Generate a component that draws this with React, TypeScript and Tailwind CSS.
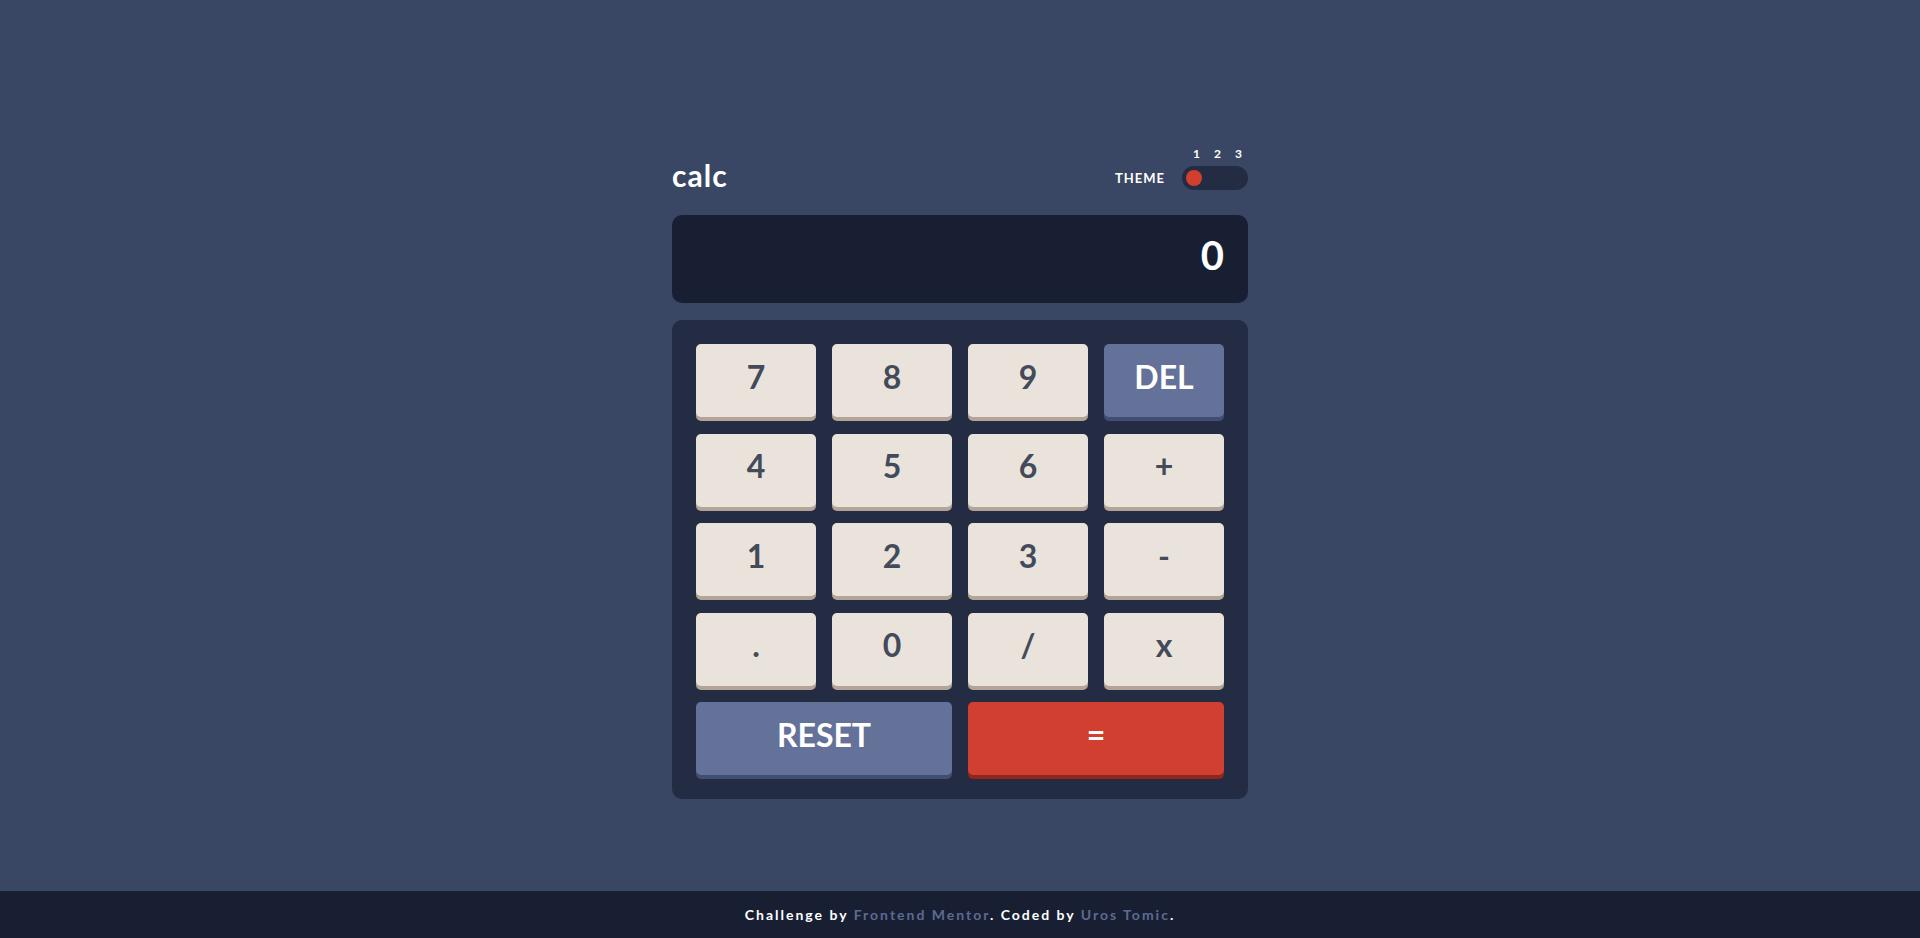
import { useState } from 'react';

type Key = { label: string; kind: 'num' | 'del' | 'eq'; wide?: boolean };

const keys: Key[] = [
  { label: '7', kind: 'num' },
  { label: '8', kind: 'num' },
  { label: '9', kind: 'num' },
  { label: 'DEL', kind: 'del' },
  { label: '4', kind: 'num' },
  { label: '5', kind: 'num' },
  { label: '6', kind: 'num' },
  { label: '+', kind: 'num' },
  { label: '1', kind: 'num' },
  { label: '2', kind: 'num' },
  { label: '3', kind: 'num' },
  { label: '-', kind: 'num' },
  { label: '.', kind: 'num' },
  { label: '0', kind: 'num' },
  { label: '/', kind: 'num' },
  { label: 'x', kind: 'num' },
  { label: 'RESET', kind: 'del', wide: true },
  { label: '=', kind: 'eq', wide: true },
];

const keyStyles = {
  num: 'bg-[#eae3dc] text-[#434a59] shadow-[0_4px_0_#b3a497] hover:bg-white',
  del: 'bg-[#647198] text-white shadow-[0_4px_0_#414e73] hover:bg-[#a2b2e1]',
  eq: 'bg-[#d03f2f] text-white shadow-[0_4px_0_#93261a] hover:bg-[#f96b5b]',
};

export default function App() {
  const [value] = useState('0');

  return (
    <div className="h-screen flex flex-col bg-[#3a4764] font-['Lato','Open_Sans',sans-serif] text-white">
      <main className="flex-1 pt-[148px]">
        <div className="w-[576px] mx-auto">
          <header className="flex items-end justify-between">
            <h1 className="text-[30px] leading-none font-bold tracking-[1px]">calc</h1>
            <div className="flex items-end">
              <span className="text-[13px] leading-[24px] font-bold tracking-[1px] mr-[17px]">THEME</span>
              <div className="flex flex-col">
                <div className="flex justify-between pl-[11px] pr-[6px] mb-[6px] text-[12px] leading-none font-bold">
                  <span>1</span>
                  <span>2</span>
                  <span>3</span>
                </div>
                <button className="w-[66px] h-[24px] rounded-full bg-[#232c43] flex items-center pl-1" aria-label="theme">
                  <span className="w-4 h-4 rounded-full bg-[#d03f2f]" />
                </button>
              </div>
            </div>
          </header>

          <div className="mt-[25px] h-[88px] rounded-[10px] bg-[#181f33] flex items-center justify-end pr-6 pb-2">
            <span className="text-[40px] leading-none font-bold">{value}</span>
          </div>

          <div className="mt-[17px] rounded-[10px] bg-[#232c43] p-6 grid grid-cols-4 gap-x-4 gap-y-[16.5px]">
            {keys.map((k) => (
              <button
                key={k.label}
                className={`h-[73px] rounded-[5px] flex items-center justify-center pb-2 text-[32px] leading-none font-bold ${keyStyles[k.kind]} ${k.wide ? 'col-span-2' : ''}`}
              >
                {k.label}
              </button>
            ))}
          </div>
        </div>
      </main>

      <footer className="h-[47px] bg-[#181f33] flex items-center justify-center text-[14px] font-bold tracking-[2px]">
        <p>
          Challenge by <a href="#" className="text-[#5d6a91]">Frontend Mentor</a>. Coded by{' '}
          <a href="#" className="text-[#5d6a91]">Uros Tomic</a>.
        </p>
      </footer>
    </div>
  );
}
